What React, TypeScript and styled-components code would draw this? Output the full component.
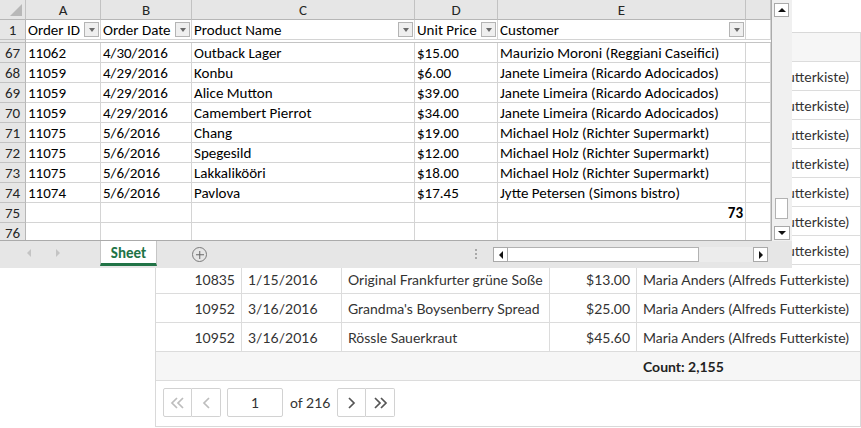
import React from "react";
import styled, { createGlobalStyle } from "styled-components";

const GlobalStyle = createGlobalStyle`
  html, body { margin: 0; padding: 0; background: #ffffff; }
  body { width: 861px; height: 428px; overflow: hidden; }
`;

/* ---------- stage ---------- */
const Stage = styled.div`
  position: relative;
  width: 861px;
  height: 428px;
  box-sizing: border-box;
  padding: 32px 0 0 155px;
  overflow: hidden;
  background: #ffffff;
`;

/* ---------- back web grid ---------- */
const PANEL_COLS = "86px 100px 208px 87px 1fr";

const Panel = styled.div`
  width: 706px;
  height: 395px;
  box-sizing: border-box;
  border: 1px solid #d9d9d9;
  display: flex;
  flex-direction: column;
  font-family: Lato, "Open Sans", sans-serif;
  font-size: 14px;
  color: #333333;
  background: #ffffff;
`;

const PRow = styled.div<{ $kind?: "head" | "foot" }>`
  display: grid;
  grid-template-columns: ${PANEL_COLS};
  height: 29px;
  flex: 0 0 29px;
  box-sizing: border-box;
  border-bottom: 1px solid #dcdcdc;
  background: ${(p) => (p.$kind ? "#f6f6f6" : "#ffffff")};
  font-weight: ${(p) => (p.$kind === "foot" ? 700 : 400)};
  color: ${(p) => (p.$kind === "foot" ? "#222222" : "#333333")};
`;

const PCell = styled.div<{ $right?: boolean; $plain?: boolean }>`
  display: flex;
  align-items: center;
  justify-content: ${(p) => (p.$right ? "flex-end" : "flex-start")};
  padding: 0 6px;
  white-space: nowrap;
  overflow: hidden;
  border-right: ${(p) => (p.$plain ? "none" : "1px solid #dcdcdc")};
  &:last-child {
    border-right: none;
  }
`;

const Pager = styled.div`
  flex: 1;
  display: flex;
  align-items: flex-start;
  padding: 7px 7px;
`;

const PagerGroup = styled.div`
  display: flex;
`;

const PagerBtn = styled.div<{ $disabled?: boolean }>`
  width: 29px;
  height: 29px;
  box-sizing: border-box;
  border: 1px solid #d2d2d2;
  display: flex;
  align-items: center;
  justify-content: center;
  color: ${(p) => (p.$disabled ? "#bdbdbd" : "#555555")};
  background: #ffffff;
  & + & {
    border-left: none;
  }
  &:first-child {
    border-radius: 2px 0 0 2px;
  }
  &:last-child {
    border-radius: 0 2px 2px 0;
  }
`;

const PageInput = styled.div`
  width: 56px;
  height: 29px;
  box-sizing: border-box;
  margin-left: 6px;
  border: 1px solid #d2d2d2;
  border-radius: 2px;
  display: flex;
  align-items: center;
  justify-content: center;
  color: #333333;
`;

const PageLabel = styled.div`
  height: 29px;
  display: flex;
  align-items: center;
  margin: 0 7px;
  color: #333333;
`;

const Chevron = ({ dir, double }: { dir: "l" | "r"; double?: boolean }) => {
  const w = double ? 15 : 9;
  const one = (x: number) =>
    dir === "l" ? `${x + 6},1 ${x + 1},6 ${x + 6},11` : `${x + 1},1 ${x + 6},6 ${x + 1},11`;
  return (
    <svg width={w} height={12} viewBox={`0 0 ${w} 12`} fill="none" stroke="currentColor" strokeWidth={1.7}>
      <polyline points={one(1)} />
      {double && <polyline points={one(7)} />}
    </svg>
  );
};

type Order = [string, string, string, string];
const orders: Order[] = [
  ["10643", "8/25/2015", "Rössle Sauerkraut", "$45.60"],
  ["10643", "8/25/2015", "Chartreuse verte", "$18.00"],
  ["10643", "8/25/2015", "Spegesild", "$12.00"],
  ["10692", "10/3/2015", "Vegie-spread", "$43.90"],
  ["10702", "10/13/2015", "Aniseed Syrup", "$10.00"],
  ["10702", "10/13/2015", "Lakkalikööri", "$18.00"],
  ["10835", "1/15/2016", "Raclette Courdavault", "$55.00"],
  ["10835", "1/15/2016", "Original Frankfurter grüne Soße", "$13.00"],
  ["10952", "3/16/2016", "Grandma's Boysenberry Spread", "$25.00"],
  ["10952", "3/16/2016", "Rössle Sauerkraut", "$45.60"],
];

const BackGrid = () => (
  <Panel>
    <PRow $kind="head">
      <PCell>Order ID</PCell>
      <PCell>Order Date</PCell>
      <PCell>Product Name</PCell>
      <PCell>Unit Price</PCell>
      <PCell>Customer</PCell>
    </PRow>
    {orders.map((o, i) => (
      <PRow key={i}>
        <PCell $right>{o[0]}</PCell>
        <PCell>{o[1]}</PCell>
        <PCell>{o[2]}</PCell>
        <PCell $right>{o[3]}</PCell>
        <PCell>Maria Anders (Alfreds Futterkiste)</PCell>
      </PRow>
    ))}
    <PRow $kind="foot">
      <PCell $plain />
      <PCell $plain />
      <PCell $plain />
      <PCell $plain />
      <PCell $plain>Count: 2,155</PCell>
    </PRow>
    <Pager>
      <PagerGroup>
        <PagerBtn $disabled>
          <Chevron dir="l" double />
        </PagerBtn>
        <PagerBtn $disabled>
          <Chevron dir="l" />
        </PagerBtn>
      </PagerGroup>
      <PageInput>1</PageInput>
      <PageLabel>of 216</PageLabel>
      <PagerGroup>
        <PagerBtn>
          <Chevron dir="r" />
        </PagerBtn>
        <PagerBtn>
          <Chevron dir="r" double />
        </PagerBtn>
      </PagerGroup>
    </Pager>
  </Panel>
);

/* ---------- excel window ---------- */
const SHEET_COLS = "26px 75px 91px 223px 83px 248px 25px";
const GRID_LINE = "#d4d4d4";
const HEAD_BG = "#e6e6e6";
const HEAD_LINE = "#c2c2c2";
const GREEN = "#217346";

const ExcelWindow = styled.div`
  position: absolute;
  top: 0;
  left: 0;
  width: 792px;
  height: 268px;
  display: grid;
  grid-template-columns: 772px 20px;
  grid-template-rows: 241px 27px;
  background: #e6e6e6;
  font-family: Carlito, "Liberation Sans", sans-serif;
  font-size: 15px;
  color: #000000;
`;

const Sheet = styled.div`
  box-sizing: border-box;
  overflow: hidden;
  background: #ffffff;
  border-right: 1px solid #ababab;
  border-bottom: 1px solid #ababab;
`;

const SRow = styled.div<{ $h?: number }>`
  display: grid;
  grid-template-columns: ${SHEET_COLS};
  height: ${(p) => p.$h ?? 20}px;
`;

const ColHead = styled.div`
  background: ${HEAD_BG};
  border-right: 1px solid ${HEAD_LINE};
  border-bottom: 1px solid #b6b6b6;
  display: flex;
  align-items: center;
  justify-content: center;
  color: #262626;
`;

const Corner = styled(ColHead)`
  position: relative;
  &::after {
    content: "";
    position: absolute;
    right: 3px;
    bottom: 3px;
    border-style: solid;
    border-width: 0 0 12px 12px;
    border-color: transparent transparent #b8b8b8 transparent;
  }
`;

const RowHead = styled.div`
  background: ${HEAD_BG};
  border-right: 1px solid #b6b6b6;
  border-bottom: 1px solid ${HEAD_LINE};
  display: flex;
  align-items: center;
  justify-content: center;
  color: #262626;
`;

const Cell = styled.div<{ $right?: boolean; $bold?: boolean }>`
  border-right: 1px solid ${GRID_LINE};
  border-bottom: 1px solid ${GRID_LINE};
  display: flex;
  align-items: center;
  justify-content: ${(p) => (p.$right ? "flex-end" : "flex-start")};
  padding: 0 2px;
  white-space: nowrap;
  overflow: hidden;
  font-weight: ${(p) => (p.$bold ? 700 : 400)};
`;

const HeaderCell = styled(Cell)`
  padding: 0 1px 0 2px;
`;

const FilterBtn = styled.div`
  margin-left: auto;
  width: 15px;
  height: 15px;
  flex: 0 0 15px;
  box-sizing: border-box;
  border: 1px solid #b4b4b4;
  background: #efefef;
  display: flex;
  align-items: center;
  justify-content: center;
  &::after {
    content: "";
    border-style: solid;
    border-width: 4px 3.5px 0 3.5px;
    border-color: #6a6a6a transparent transparent transparent;
  }
`;

const FreezeRow = styled.div`
  display: grid;
  grid-template-columns: 26px 1fr;
  height: 3px;
`;

const FreezeHead = styled.div`
  background: ${HEAD_BG};
  border-right: 1px solid #b6b6b6;
  border-bottom: 1px solid #bdbdbd;
`;

const FreezeLine = styled.div`
  background: #ffffff;
  border-bottom: 1px solid #c4c4c4;
`;

const Tri = styled.span<{ $dir: "up" | "down" | "left" | "right"; $color?: string }>`
  width: 0;
  height: 0;
  border-style: solid;
  ${(p) => {
    const c = p.$color ?? "#111111";
    switch (p.$dir) {
      case "up":
        return `border-width: 0 4px 4px 4px; border-color: transparent transparent ${c} transparent;`;
      case "down":
        return `border-width: 4px 4px 0 4px; border-color: ${c} transparent transparent transparent;`;
      case "left":
        return `border-width: 4px 4px 4px 0; border-color: transparent ${c} transparent transparent;`;
      default:
        return `border-width: 4px 0 4px 4px; border-color: transparent transparent transparent ${c};`;
    }
  }}
`;

const VScroll = styled.div`
  background: #f0f0f0;
  display: flex;
  flex-direction: column;
  padding: 3px 0 1px 0;
  box-sizing: border-box;
`;

const ScrollBtn = styled.div<{ $w?: number; $h?: number }>`
  width: ${(p) => p.$w ?? 15}px;
  height: ${(p) => p.$h ?? 15}px;
  box-sizing: border-box;
  border: 1px solid #a9a9a9;
  background: #ffffff;
  display: flex;
  align-items: center;
  justify-content: center;
  flex: 0 0 auto;
`;

const VBtn = styled(ScrollBtn)`
  margin-left: 2px;
`;

const VThumb = styled.div`
  margin: auto 0 7px 3px;
  width: 13px;
  height: 21px;
  box-sizing: border-box;
  border: 1px solid #b2b2b2;
  background: #ffffff;
`;

const TabBar = styled.div`
  grid-column: 1 / 3;
  display: flex;
  align-items: flex-start;
  background: #e6e6e6;
`;

const NavArrows = styled.div`
  width: 100px;
  height: 24px;
  display: flex;
  align-items: center;
  padding-left: 27px;
  box-sizing: border-box;
  gap: 25px;
`;

const SheetTab = styled.div`
  width: 57px;
  height: 25px;
  box-sizing: border-box;
  background: #ffffff;
  border-left: 1px solid #c6c6c6;
  border-right: 1px solid #c6c6c6;
  border-bottom: 3px solid ${GREEN};
  color: ${GREEN};
  font-weight: 700;
  display: flex;
  align-items: center;
  justify-content: center;
  padding-top: 1px;
`;

const AddSheet = styled.div`
  margin: 6px 0 0 35px;
  width: 15px;
  height: 15px;
  box-sizing: border-box;
  border: 1.5px solid #7a7a7a;
  border-radius: 50%;
  position: relative;
  &::before,
  &::after {
    content: "";
    position: absolute;
    background: #6a6a6a;
    left: 50%;
    top: 50%;
    transform: translate(-50%, -50%);
  }
  &::before {
    width: 8px;
    height: 1.5px;
  }
  &::after {
    width: 1.5px;
    height: 8px;
  }
`;

const Spacer = styled.div`
  flex: 1;
`;

const Dots = styled.div`
  width: 16px;
  height: 27px;
  display: flex;
  flex-direction: column;
  align-items: center;
  justify-content: center;
  gap: 2px;
  padding-bottom: 2px;
  box-sizing: border-box;
  & > i {
    width: 2px;
    height: 2px;
    background: #a8a8a8;
  }
`;

const HScroll = styled.div`
  margin: 6px 24px 0 9px;
  width: 275px;
  height: 15px;
  display: flex;
  background: #ececec;
`;

const HThumb = styled.div`
  width: 191px;
  height: 15px;
  box-sizing: border-box;
  border: 1px solid #b2b2b2;
  border-left: none;
  background: #ffffff;
`;

const HTrack = styled.div`
  flex: 1;
`;

const ColLetter = ["A", "B", "C", "D", "E"];
type XRow = [string, string, string, string, string, string];
const xRows: XRow[] = [
  ["67", "11062", "4/30/2016", "Outback Lager", "$15.00", "Maurizio Moroni (Reggiani Caseifici)"],
  ["68", "11059", "4/29/2016", "Konbu", "$6.00", "Janete Limeira (Ricardo Adocicados)"],
  ["69", "11059", "4/29/2016", "Alice Mutton", "$39.00", "Janete Limeira (Ricardo Adocicados)"],
  ["70", "11059", "4/29/2016", "Camembert Pierrot", "$34.00", "Janete Limeira (Ricardo Adocicados)"],
  ["71", "11075", "5/6/2016", "Chang", "$19.00", "Michael Holz (Richter Supermarkt)"],
  ["72", "11075", "5/6/2016", "Spegesild", "$12.00", "Michael Holz (Richter Supermarkt)"],
  ["73", "11075", "5/6/2016", "Lakkalikööri", "$18.00", "Michael Holz (Richter Supermarkt)"],
  ["74", "11074", "5/6/2016", "Pavlova", "$17.45", "Jytte Petersen (Simons bistro)"],
];

const Excel = () => (
  <ExcelWindow>
    <Sheet>
      <SRow>
        <Corner />
        {ColLetter.map((l) => (
          <ColHead key={l}>{l}</ColHead>
        ))}
        <ColHead />
      </SRow>
      <SRow>
        <RowHead>1</RowHead>
        {["Order ID", "Order Date", "Product Name", "Unit Price", "Customer"].map((h) => (
          <HeaderCell key={h}>
            {h}
            <FilterBtn />
          </HeaderCell>
        ))}
        <Cell />
      </SRow>
      <FreezeRow>
        <FreezeHead />
        <FreezeLine />
      </FreezeRow>
      {xRows.map((r) => (
        <SRow key={r[0]}>
          <RowHead>{r[0]}</RowHead>
          <Cell>{r[1]}</Cell>
          <Cell>{r[2]}</Cell>
          <Cell>{r[3]}</Cell>
          <Cell>{r[4]}</Cell>
          <Cell>{r[5]}</Cell>
          <Cell />
        </SRow>
      ))}
      <SRow>
        <RowHead>75</RowHead>
        <Cell />
        <Cell />
        <Cell />
        <Cell />
        <Cell $right $bold>
          73
        </Cell>
        <Cell />
      </SRow>
      <SRow>
        <RowHead>76</RowHead>
        <Cell />
        <Cell />
        <Cell />
        <Cell />
        <Cell />
        <Cell />
      </SRow>
    </Sheet>
    <VScroll>
      <VBtn $h={14}>
        <Tri $dir="up" />
      </VBtn>
      <VThumb />
      <VBtn $w={16} $h={14}>
        <Tri $dir="down" />
      </VBtn>
    </VScroll>
    <TabBar>
      <NavArrows>
        <Tri $dir="left" $color="#c4c4c4" />
        <Tri $dir="right" $color="#c4c4c4" />
      </NavArrows>
      <SheetTab>Sheet</SheetTab>
      <AddSheet />
      <Spacer />
      <Dots>
        <i />
        <i />
        <i />
      </Dots>
      <HScroll>
        <ScrollBtn>
          <Tri $dir="left" />
        </ScrollBtn>
        <HThumb />
        <HTrack />
        <ScrollBtn>
          <Tri $dir="right" />
        </ScrollBtn>
      </HScroll>
    </TabBar>
  </ExcelWindow>
);

export default function App() {
  return (
    <>
      <GlobalStyle />
      <Stage>
        <BackGrid />
        <Excel />
      </Stage>
    </>
  );
}
